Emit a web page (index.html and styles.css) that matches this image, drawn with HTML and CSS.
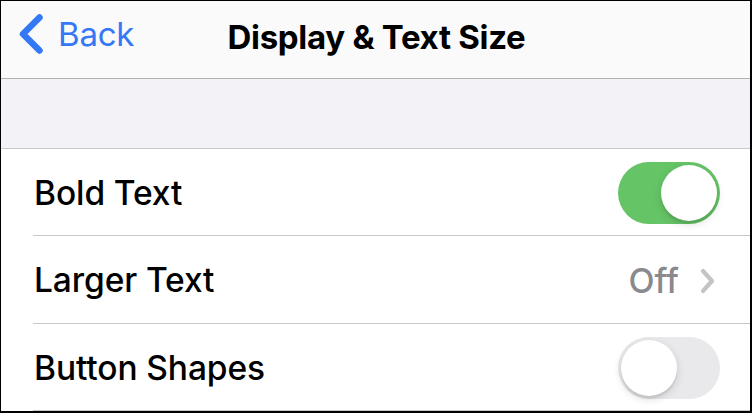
FILE: index.html
```html
<!DOCTYPE html>
<html>
<head>
<meta charset="utf-8">
<link rel="stylesheet" href="styles.css">
</head>
<body>
<div class="frame">
  <header class="nav">
    <div class="back">
      <svg class="back-chevron" width="28" height="42" viewBox="0 0 28 42"><path d="M22.5 4.5 L6 21 L22.5 37.5" fill="none" stroke="#3478f6" stroke-width="6.5" stroke-linecap="round" stroke-linejoin="round"/></svg>
      <span class="back-label">Back</span>
    </div>
    <h1 class="title">Display &amp; Text Size</h1>
  </header>
  <div class="spacer"></div>
  <ul class="list">
    <li class="row r1">
      <span class="label">Bold Text</span>
      <span class="toggle on"><span class="knob"></span></span>
    </li>
    <li class="row r2">
      <span class="label">Larger Text</span>
      <span class="detail">
        <span class="value">Off</span>
        <svg class="chev" width="17" height="26" viewBox="0 0 17 26"><path d="M4 3 L13 13 L4 23" fill="none" stroke="#c4c4c7" stroke-width="4.2" stroke-linecap="round" stroke-linejoin="round"/></svg>
      </span>
    </li>
    <li class="row r3">
      <span class="label">Button Shapes</span>
      <span class="toggle off"><span class="knob"></span></span>
    </li>
  </ul>
</div>
</body>
</html>
```

FILE: styles.css
```css
* { box-sizing: border-box; margin: 0; padding: 0; }
html, body { width: 752px; height: 413px; overflow: hidden; background: #fff; }
body { font-family: Inter, "Noto Sans", sans-serif; }

.frame {
  width: 752px;
  height: 413px;
  border-style: solid;
  border-color: #000;
  border-width: 1px 2px 2px 1px;
  display: flex;
  flex-direction: column;
  background: #fff;
}

.nav {
  height: 78px;
  flex: none;
  background: #fafafa;
  border-bottom: 1px solid #b2b2b4;
  display: flex;
  align-items: center;
  justify-content: center;
  position: relative;
}
.back {
  position: absolute;
  left: 16px;
  top: 12px;
  display: flex;
  align-items: center;
  gap: 13px;
  color: #3478f6;
}
.back-label {
  font-size: 33px;
  font-weight: 400;
  letter-spacing: -0.2px;
  margin-top: -1px;
}
.title {
  font-size: 33px;
  font-weight: 700;
  color: #000;
  letter-spacing: -0.3px;
  margin-top: -6px;
  margin-left: 2px;
}

.spacer {
  height: 70px;
  flex: none;
  background: #f2f2f7;
  border-bottom: 1px solid #c8c7cc;
}

.list { list-style: none; flex: 1; background: #fff; }
.row {
  display: flex;
  align-items: center;
  justify-content: space-between;
  padding-left: 33px;
  padding-right: 30px;
  position: relative;
}
.row::after {
  content: "";
  position: absolute;
  left: 32px;
  right: 0;
  bottom: 0;
  height: 1px;
  background: #c8c7cc;
}
.r1 { height: 87px; }
.r2 { height: 88px; padding-right: 34px; }
.r3 { height: 87px; }

.label {
  font-size: 33.5px;
  font-weight: 500;
  color: #000;
  letter-spacing: -0.1px;
}

.detail { display: flex; align-items: center; gap: 20px; }
.value { font-size: 34px; color: #8a8a8e; font-weight: 500; }
.chev { margin-top: 2px; }

.toggle {
  width: 102px;
  height: 62px;
  border-radius: 31px;
  position: relative;
  flex: none;
}
.toggle.on { background: #65c466; }
.toggle.off { background: #e9e9eb; }
.knob {
  position: absolute;
  top: 3px;
  width: 56px;
  height: 56px;
  border-radius: 50%;
  background: #fff;
  box-shadow: 0 3px 8px rgba(0,0,0,0.15), 0 3px 1px rgba(0,0,0,0.06);
}
.toggle.on .knob { left: 43px; }
.toggle.off .knob { left: 3px; }
```
